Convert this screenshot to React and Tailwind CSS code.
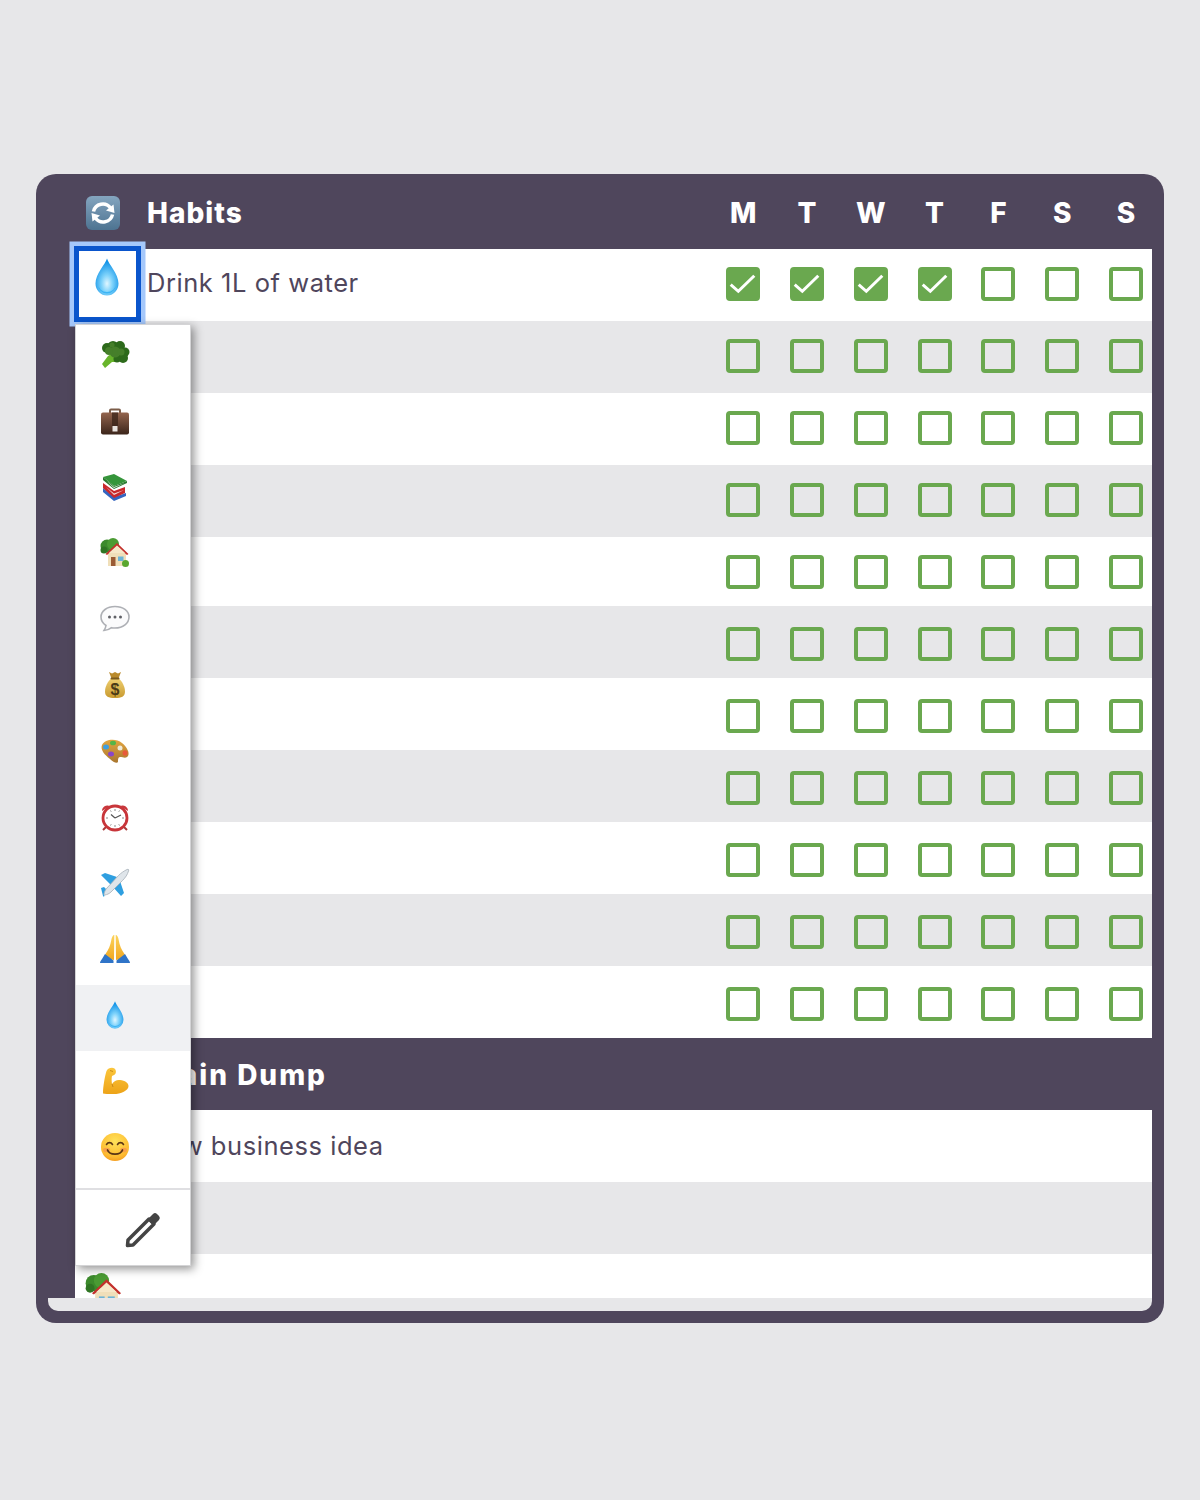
import React from "react";

const G = ({ id, a, b, x2 = 0, y2 = 1 }) => (
  <linearGradient id={id} x1="0" y1="0" x2={x2} y2={y2}>
    <stop offset="0" stopColor={a} />
    <stop offset="1" stopColor={b} />
  </linearGradient>
);

function Drop({ w, h }) {
  return (
    <svg width={w} height={h} viewBox="0 0 26 38">
      <defs>
        <radialGradient id={`dr${w}`} cx="0.5" cy="0.68" r="0.62">
          <stop offset="0" stopColor="#e0f6ff" />
          <stop offset="0.38" stopColor="#7fd3fb" />
          <stop offset="1" stopColor="#0a8fe6" />
        </radialGradient>
      </defs>
      <path d="M13 0.5C11.5 6 1.5 16 1.5 25.5a11.5 12 0 0 0 23 0C24.500 16 14.500 6 13 0.5Z" fill={`url(#dr${w})`} />
      <path d="M4 26a9 9.500 0 0 0 18 0a9 8 0 0 1-18 0Z" fill="#1fa8f2" opacity="0.7" />
    </svg>
  );
}

const HouseArt = ({ door = true }) => (
  <>
    <circle cx="7" cy="8" r="6.500" fill="#3c8a2c" />
    <circle cx="13" cy="6" r="6" fill="#4a9b33" />
    <circle cx="4" cy="12" r="3.500" fill="#2f7523" />
    <rect x="8" y="14" width="18" height="14" fill="#f0dfb9" />
    <path d="M5.500 16L17 5l11.500 11-1.500 1L17 8 7 17z" fill="#c3302c" />
    <path d="M9 15l8-7.500 8 7.500z" fill="#f6e8c9" />
    {door ? (
      <rect x="11" y="19" width="4.500" height="9" fill="#9a5b35" />
    ) : (
      <rect x="11" y="18.500" width="4.500" height="4.500" fill="#6cb4d6" />
    )}
    <rect x="18" y="18.500" width="5.500" height="4.500" fill="#6cb4d6" />
    {door && <circle cx="25.500" cy="25.500" r="3.500" fill="#5aa72f" />}
  </>
);

const icons = {
  broccoli: (
    <svg width="30" height="30" viewBox="0 0 30 30">
      <path d="M2 24l3 4 7-6 5 0-3-10-6 4z" fill="#68b52b" />
      <g fill="#2d6a1b">
        <circle cx="7" cy="8" r="5" />
        <circle cx="13" cy="6.500" r="5.500" />
        <circle cx="20" cy="6" r="5" />
        <circle cx="25" cy="12" r="4.500" />
        <circle cx="23" cy="18" r="5" />
        <circle cx="17" cy="19" r="3.500" />
      </g>
      <g fill="#457f2a">
        <circle cx="15" cy="12" r="5.500" />
        <circle cx="9" cy="11" r="4" />
        <circle cx="21" cy="12" r="3.500" />
        <circle cx="12" cy="5" r="2.500" />
      </g>
    </svg>
  ),
  briefcase: (
    <svg width="30" height="30" viewBox="0 0 30 30">
      <defs><G id="bc" a="#94654e" b="#3b251b" /></defs>
      <path d="M10 8V4.500a1 1 0 0 1 1-1h8a1 1 0 0 1 1 1V8" fill="none" stroke="#7b5c49" strokeWidth="2" />
      <rect x="1" y="6.500" width="28" height="22" rx="2" fill="url(#bc)" />
      <rect x="12" y="6.500" width="6" height="14" fill="#3a2419" opacity="0.75" />
      <rect x="12.500" y="20" width="5" height="5.500" fill="#e9e4e0" />
    </svg>
  ),
  books: (
    <svg width="30" height="30" viewBox="0 0 30 30">
      <path d="M3 16L14 25L26 21V24L14 29L3 20Z" fill="#3565c0" />
      <path d="M3 11L14 19L25 15V21L14 26L3 16Z" fill="#c9282c" />
      <path d="M6 15L14 21.500L24 18L14 23Z" fill="#f1dcdc" />
      <path d="M3 5L14 14L27 9V11L14 17L3 8Z" fill="#2a7a30" />
      <path d="M3 5L14 2L27 9L14 14Z" fill="#35953a" />
      <path d="M6 8.500L14 15L25 11L14 16Z" fill="#eef3ea" />
    </svg>
  ),
  house: (
    <svg width="30" height="30" viewBox="0 0 30 30"><HouseArt /></svg>
  ),
  speech: (
    <svg width="30" height="30" viewBox="0 0 30 30">
      <path d="M15 2.500C7 2.500 1 7 1 13c0 3.500 2 6.500 5 8.500-.3 2-1 3.500-2 5 3 0 5.500-1.200 7.500-2.800 1 .2 2.300.3 3.500.3 8 0 14-4.800 14-11S23 2.500 15 2.500Z" fill="#fbfbfc" stroke="#aeb0b5" strokeWidth="1.600" />
      <circle cx="9.500" cy="13" r="1.500" fill="#5f6066" />
      <circle cx="15" cy="13" r="1.500" fill="#5f6066" />
      <circle cx="20.500" cy="13" r="1.500" fill="#5f6066" />
    </svg>
  ),
  money: (
    <svg width="30" height="30" viewBox="0 0 30 30">
      <defs><G id="mb" a="#efcf70" b="#c89a30" /></defs>
      <path d="M9 2l3 1.500L15 2l3 1.500L21 2l-2.500 6.500h-7z" fill="#b98a2c" />
      <path d="M11 8.500h8c3 3 6 8 6 13 0 5-3.500 6.500-10 6.500S5 26.500 5 21.500c0-5 3-10 6-13Z" fill="url(#mb)" />
      <rect x="10.500" y="7.500" width="9" height="2" rx="1" fill="#7b5a1c" />
      <text x="15" y="25" textAnchor="middle" fontFamily="'Liberation Sans',sans-serif" fontWeight="700" fontSize="16" fill="#4b3a17">$</text>
    </svg>
  ),
  palette: (
    <svg width="30" height="30" viewBox="0 0 30 30">
      <defs><G id="pl" a="#e2a640" b="#a9762f" /></defs>
      <path d="M2 9c3-6 14-7 20-2 5 4 8 10 6 13-2 3-5 1-8 1-2 0-2 3-2 5-1 2-5 0-8-3C5 19 0 14 2 9Z" fill="url(#pl)" />
      <ellipse cx="6" cy="11" rx="3" ry="2.500" fill="#3f9fe0" />
      <ellipse cx="13" cy="7" rx="3" ry="2.300" fill="#55b548" />
      <ellipse cx="11" cy="18" rx="3" ry="2.500" fill="#8a45c8" />
      <ellipse cx="20" cy="12" rx="2.500" ry="2.500" fill="#f0ead8" />
      <ellipse cx="25" cy="17" rx="2.500" ry="2.800" fill="#e85a3a" />
    </svg>
  ),
  clock: (
    <svg width="30" height="30" viewBox="0 0 30 30">
      <path d="M2 9a5.500 5.500 0 0 1 8-5zM28 9a5.500 5.500 0 0 0-8-5z" fill="#c9383c" />
      <path d="M6 25l-3 3M24 25l3 3" stroke="#a83a3a" strokeWidth="2" />
      <circle cx="15" cy="16" r="12" fill="#fff" stroke="#c8353a" strokeWidth="2.800" />
      <path d="M15 7v2M15 23v2M6 16h2M22 16h2M10.500 8.500l.7 1.200M19.500 8.500l-.7 1.200M10.500 23.500l.7-1.200M19.500 23.500l-.7-1.200" stroke="#888" strokeWidth="1" />
      <path d="M15 16l-4-3.500M15 16l6-3" stroke="#555" strokeWidth="1.200" />
    </svg>
  ),
  plane: (
    <svg width="30" height="30" viewBox="0 0 30 30">
      <path d="M1 7l4-2 12 4-6 8zM13 19l7-6 4 12-3 3z" fill="#2f9fe0" />
      <path d="M1 20l3-1 4 4-3 2-1 4-1-1-1-4z" fill="#2f9fe0" />
      <path d="M27 1.500c1.500-.5 2 0 1.500 1.500-1 3.500-3 6.500-6 9.500L11 24c-2 2-4 2.500-6 3-.7.200-1.200-.3-1-1 .5-2 1-4 3-6L18.500 7.500C21 5 24 3 27 1.500Z" fill="#dfe5ea" stroke="#a5afb8" strokeWidth="0.800" />
    </svg>
  ),
  pray: (
    <svg width="30" height="30" viewBox="0 0 30 30">
      <defs><G id="pr" a="#fcd45c" b="#f1a61f" /></defs>
      <path d="M14.300 1c-1.500 0-2.500 2-3 5C10.500 11 8.500 16 5.500 20l-1 4 9.500 2 .3-24zM15.700 1c1.500 0 2.500 2 3 5 .8 5 2.800 10 5.800 14l1 4-9.500 2-.3-24z" fill="url(#pr)" />
      <path d="M5 20l8.500 6.500V29H0c0-2 1.500-3 2-4zM25 20l-8.500 6.500V29H30c0-2-1.500-3-2-4z" fill="#2f74c8" />
    </svg>
  ),
  muscle: (
    <svg width="30" height="30" viewBox="0 0 30 30">
      <defs><G id="mu" a="#fbc63c" b="#eda318" /></defs>
      <path d="M3 27.500C3 20 5 10 6.500 5C8 2 12 1 14.500 2.500C16.500 4 16.500 8 14 9L12 10C11.500 12 11.500 15 12 18C14 15 17 13.500 20 14C25 14.500 28.500 17 28.500 20C28.500 25 20 28.500 12 28C8 28 5 28 3 27.500Z" fill="url(#mu)" />
      <path d="M10 4.500l3 1M12 18l1 3" stroke="#c88a1a" strokeWidth="1" fill="none" />
    </svg>
  ),
  smile: (
    <svg width="30" height="30" viewBox="0 0 30 30">
      <defs>
        <radialGradient id="sm" cx="0.5" cy="0.3" r="0.8">
          <stop offset="0" stopColor="#ffe25a" />
          <stop offset="0.7" stopColor="#fdbb30" />
          <stop offset="1" stopColor="#f08c18" />
        </radialGradient>
      </defs>
      <circle cx="15" cy="15" r="14" fill="url(#sm)" />
      <ellipse cx="6.500" cy="18" rx="3.500" ry="2.300" fill="#f7914f" opacity="0.7" />
      <ellipse cx="23.500" cy="18" rx="3.500" ry="2.300" fill="#f7914f" opacity="0.7" />
      <path d="M6.500 12.500c1.500-2.500 4.500-2.500 6 0M17.500 12.500c1.500-2.500 4.500-2.500 6 0" fill="none" stroke="#5b3614" strokeWidth="1.600" strokeLinecap="round" />
      <path d="M7.500 18c2 5.500 13 5.500 15 0" fill="none" stroke="#5b3614" strokeWidth="1.800" strokeLinecap="round" />
    </svg>
  ),
};

const menuItems = [
  { k: "broccoli", n: icons.broccoli },
  { k: "briefcase", n: icons.briefcase },
  { k: "books", n: icons.books },
  { k: "house", n: icons.house },
  { k: "speech", n: icons.speech },
  { k: "money", n: icons.money },
  { k: "palette", n: icons.palette },
  { k: "clock", n: icons.clock },
  { k: "plane", n: icons.plane },
  { k: "pray", n: icons.pray },
  { k: "drop", n: <Drop w={20} h={28} />, active: true },
  { k: "muscle", n: icons.muscle },
  { k: "smile", n: icons.smile },
];

const days = ["M", "T", "W", "T", "F", "S", "S"];

function Box({ checked }) {
  return (
    <div className={`w-[34px] h-[34px] rounded-[4px] border-4 border-[#6aa84f] ${checked ? "bg-[#6aa84f]" : ""}`}>
      {checked && (
        <svg width="26" height="26" viewBox="0 0 26 26" className="block overflow-visible">
          <path d="M0.700 13.700L8.300 20.300L24.300 4.700" fill="none" stroke="#fff" strokeWidth="3" />
        </svg>
      )}
    </div>
  );
}

function Checks({ done = 0 }) {
  return (
    <>
      {days.map((_, i) => (
        <div key={i} className="w-[63.83px] shrink-0 flex justify-center">
          <Box checked={i < done} />
        </div>
      ))}
    </>
  );
}

function Menu() {
  return (
    <div className="absolute left-0 top-[75px] z-20 w-[116px] h-[942px] bg-white border border-[#d4d4d6] shadow-[3px_3px_9px_rgba(0,0,0,0.42)]">
      {menuItems.map((it) => (
        <div key={it.k} className={`h-[66px] flex items-center pb-[6px] ${it.active ? "bg-[#f0f1f3]" : ""}`}>
          <div className="w-[30px] h-[30px] ml-[24px] flex items-center justify-center">{it.n}</div>
        </div>
      ))}
      <div className="mt-[5px] border-t-2 border-[#dfdfe2] pt-[22px] pl-[49px]">
        <svg width="36" height="36" viewBox="0 0 36 36">
          <path d="M2.500 33.500L3 28L24 7L29 12L8 33Z" fill="#fff" stroke="#444" strokeWidth="3.500" strokeLinejoin="round" />
          <path d="M22.500 7.500L28 2a3 3 0 0 1 4 0l2 2a3 3 0 0 1 0 4L28.500 13.500Z" fill="#444" />
        </svg>
      </div>
    </div>
  );
}

export default function App() {
  const rowClass = (i) => {
    const bg = i % 2 === 0 ? "bg-white" : "bg-[#e7e7e9]";
    const h = i === 4 ? "h-[69px]" : "h-[72px]";
    const pt = i > 4 ? "pt-[21px]" : "pt-[18px]";
    return `${bg} ${h} ${pt} flex items-start`;
  };
  return (
    <div className="min-h-[1500px] bg-[#e7e7e9] pt-[174px] px-[36px] text-[#4f465c]" style={{ fontFamily: "Inter, 'Noto Sans', sans-serif" }}>
      <div className="h-[1149px] rounded-[20px] bg-[#4f465c] px-[12px] pb-[12px] flex flex-col">
        <div className="h-[1124px] flex flex-col shrink-0">
          <div className="h-[75px] shrink-0 flex items-center text-white font-extrabold pt-[2px]">
            <div className="w-[99px] shrink-0 pl-[38px]">
              <svg width="34" height="34" viewBox="0 0 34 34" className="block">
                <defs><G id="sy" a="#84a5bf" b="#4d7391" /></defs>
                <rect width="34" height="34" rx="6" fill="url(#sy)" />
                <path d="M7.500 15.500A9.500 9.500 0 0 1 24.500 12" fill="none" stroke="#fff" strokeWidth="3.500" />
                <path d="M27.500 8.500L28.500 17L20 14.500Z" fill="#fff" />
                <path d="M26.500 18.500A9.500 9.500 0 0 1 9.500 22" fill="none" stroke="#fff" strokeWidth="3.500" />
                <path d="M6.500 25.500L5.500 17L14 19.500Z" fill="#fff" />
              </svg>
            </div>
            <div className="w-[564.2px] shrink-0 text-[28px] tracking-[1px]">Habits</div>
            {days.map((d, i) => (
              <div key={i} className="w-[63.83px] shrink-0 text-center text-[28px]">{d}</div>
            ))}
          </div>

          <div className="ml-[27px] w-[1077px] relative">
            {Array.from({ length: 11 }).map((_, i) => (
              <div key={i} className={rowClass(i)}>
                <div className="w-[72px] shrink-0 relative self-stretch -mt-[18px] h-[72px]">
                  {i === 0 && (
                    <>
                      <div className="absolute -left-[1px] -top-[3px] z-10 w-[67px] h-[76px] bg-white border-[5px] border-[#0a55cc] shadow-[0_0_0_4.500px_#a5c8fb] flex items-center justify-center">
                        <div className="-mt-[15px] -ml-[1px]"><Drop w={26} h={38} /></div>
                      </div>
                      <Menu />
                    </>
                  )}
                </div>
                <div className="w-[564.2px] shrink-0 -mt-[18px] h-[69px] flex items-center text-[25.500px] tracking-[0.55px]">
                  {i === 0 ? "Drink 1L of water" : ""}
                </div>
                <Checks done={i === 0 ? 4 : 0} />
              </div>
            ))}

            <div className="h-[72px] bg-[#4f465c] -ml-[27px] pl-[99px] pt-[2px] flex items-center text-white font-extrabold text-[28px] tracking-[2px]">Brain Dump</div>
            <div className="h-[72px] bg-white pl-[72px] flex items-center text-[25.500px] tracking-[0.55px]">New business idea</div>
            <div className="h-[72px] bg-[#e7e7e9]"></div>
            <div className="h-[44px] bg-white overflow-hidden pl-[10px] pt-[19px]">
              <svg width="38" height="38" viewBox="0 0 30 30"><HouseArt door={false} /></svg>
            </div>
          </div>
        </div>
        <div className="h-[13px] bg-[#e7e7e9] rounded-b-[10px]"></div>
      </div>
    </div>
  );
}
